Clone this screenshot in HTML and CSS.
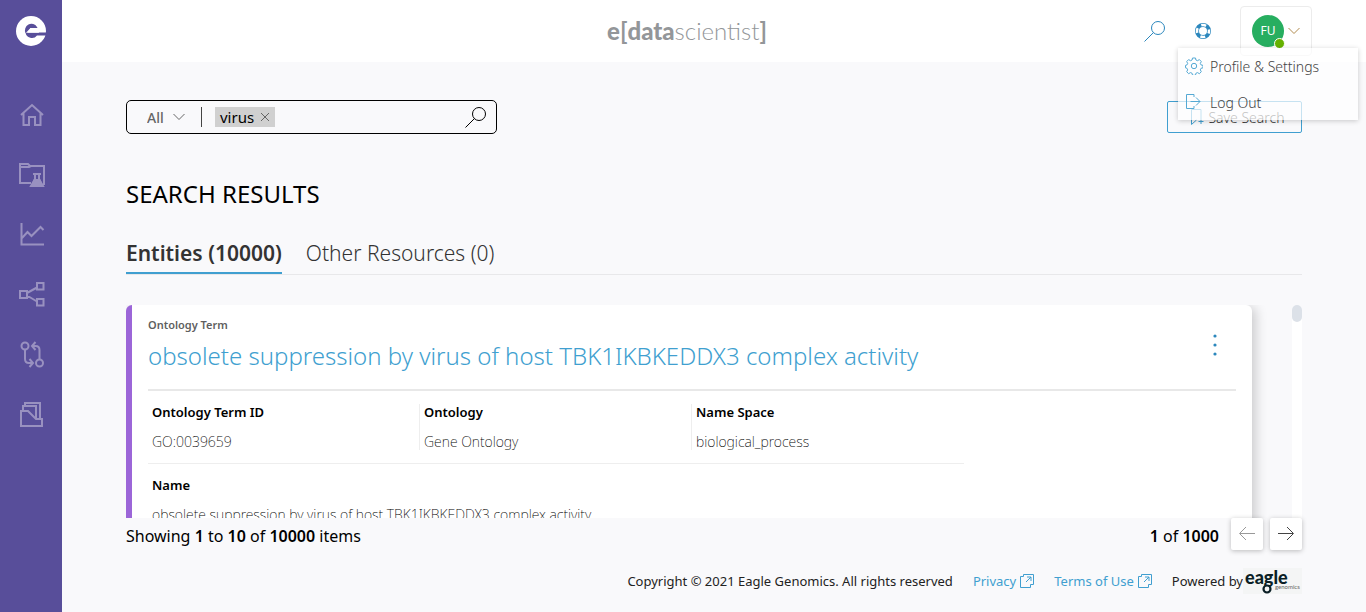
FILE: index.html
```html
<!DOCTYPE html>
<html lang="en">
<head>
<meta charset="utf-8">
<meta name="viewport" content="width=device-width, initial-scale=1">
<title>e[datascientist]</title>
<link rel="stylesheet" href="styles.css">
</head>
<body>
<div class="app">
  <nav class="sidebar" aria-label="Main">
    <a class="sidebar-logo" href="#" aria-label="Start">
      <svg width="30" height="30" viewBox="0 0 30 30"><circle cx="15" cy="15" r="15" fill="#fff"/><path d="M9.500 17A6.500 6.500 0 0 1 21 11L21.500 12H14.500L11.500 17Z" fill="#584e9a"/><path d="M9.500 16.500H30V19.500H21A6.500 6.500 0 0 1 9.500 16.500Z" fill="#584e9a"/><path d="M14.500 12H22L23 16.800H10Z" fill="#fff"/></svg>
    </a>
    <a class="nav-item" href="#" aria-label="Home"><svg viewBox="0 0 26 26"><path d="M2 13 13 3l11 10M4.500 11v12H10v-8h6v8h5.500V11"/></svg></a>
    <a class="nav-item" href="#" aria-label="Projects"><svg viewBox="0 0 26 26"><path d="M12 21H1V2h8l2 2h14v19M1 5h9l2-1"/><path d="M14 12h8M16 12v5l-2.500 5.500h9L20 17v-5"/><path class="fill" d="M15.500 18h5l3.500 6H12Z"/></svg></a>
    <a class="nav-item" href="#" aria-label="Analytics"><svg viewBox="0 0 26 26"><path d="M2.500 1v21.500H25M3 16l5.500-6 4 4L21.500 5l3 3"/></svg></a>
    <a class="nav-item" href="#" aria-label="Network"><svg viewBox="0 0 26 26"><path d="M1 9h7v7H1zM18 1h6.500v6.500H18zM18 17h6.500v6.500H18zM8 11 18 5.500M8 13.500l10 6"/></svg></a>
    <a class="nav-item" href="#" aria-label="Compare"><svg viewBox="0 0 26 26"><circle cx="6" cy="4" r="3.500"/><circle cx="20.500" cy="21" r="3.500"/><path d="M6 7.500V17q0 4 4 4h3.500M10.500 17l3.500 4-3.500 4M20.500 17.500V8q0-4-4-4H13.500M16.500 0l-3.500 4 3.500 4"/></svg></a>
    <a class="nav-item" href="#" aria-label="Collections"><svg viewBox="0 0 26 26"><path d="M2 9h7l8 8h6v7H2ZM4 9V4h13v13M6 4V1h15v16"/></svg></a>
  </nav>

  <div class="page">
    <header class="topbar">
      <a class="brand" href="#"><b>e</b><i>[</i><b>data</b><span>scientist</span><i>]</i></a>
      <div class="top-actions">
        <button class="icon-button" type="button" aria-label="Search"><svg width="22" height="22" viewBox="0 0 22 22"><circle cx="14" cy="8" r="6.500"/><path d="m9.500 12.500-9 9"/></svg></button>
        <button class="icon-button" type="button" aria-label="Help"><svg width="18" height="18" viewBox="0 0 18 18"><circle cx="9" cy="9" r="6" stroke-width="4"/><circle cx="9" cy="9" r="6" stroke="#fff" stroke-width="2.500" stroke-dasharray="5 4.425" stroke-dashoffset="2.500"/></svg></button>
        <div class="account">
          <button class="account-button" type="button" aria-expanded="true" aria-label="Account FU">
            <span class="avatar">FU<span class="presence"></span></span>
            <svg width="12" height="8" viewBox="0 0 12 8"><path d="m.500 1 5.500 5.500L11.500 1"/></svg>
          </button>
          <div class="menu">
            <a href="#"><svg width="18" height="18" viewBox="0 0 18 18"><circle cx="9" cy="9" r="2.700"/><path d="m7.500 1h3l.4 2 1.600.7 1.900-1.100 1.900 2-1 1.800.7 1.500 2 .5v2.400l-2 .5-.7 1.600 1 1.800-1.900 2-1.900-1.100-1.600.7-.4 2h-3l-.4-2-1.600-.7-1.900 1.100-1.900-2 1-1.800-.7-1.600-1.500-.5V8.400l1.500-.5.7-1.500-1-1.800 1.900-2 1.900 1.100 1.600-.7Z"/></svg>Profile &amp; Settings</a>
            <a href="#"><svg width="18" height="18" viewBox="0 0 18 18"><path d="M9 4V1.500H1.500v14H9V13M5.500 8.500H15M11 4.500l4 4-4 4"/></svg>Log Out</a>
          </div>
        </div>
      </div>
    </header>

    <main class="content">
      <div class="toolbar">
        <form class="search" role="search">
          <label class="scope"><select aria-label="Search scope"><option>All</option></select><svg width="12" height="8" viewBox="0 0 12 8"><path d="m.500 1 5.500 5.500L11.500 1"/></svg></label>
          <span class="chip">virus<button type="button" aria-label="Remove virus"><svg width="10" height="10" viewBox="0 0 10 10"><path d="m1 1 8 8M9 1 1 9"/></svg></button></span>
          <input type="text" aria-label="Search terms">
          <button class="search-go" type="submit" aria-label="Search"><svg width="22" height="22" viewBox="0 0 22 22"><circle cx="14" cy="8" r="6.500"/><path d="m9.500 12.500-9 9"/></svg></button>
        </form>
        <button class="save" type="button"><svg width="14" height="18" viewBox="0 0 14 18"><path d="M6.500 12 1.500 16.500V1.500h9.500V11M11 11v5M8.500 13.500h5"/></svg>Save Search</button>
      </div>

      <h1>SEARCH RESULTS</h1>

      <div class="tabs" role="tablist">
        <button class="tab active" type="button" role="tab" aria-selected="true">Entities (10000)</button>
        <button class="tab" type="button" role="tab" aria-selected="false">Other Resources (0)</button>
      </div>

      <div class="results">
        <article class="card">
          <div class="card-head">
            <div>
              <p class="kind">Ontology Term</p>
              <h2><a href="#">obsolete suppression by virus of host TBK1IKBKEDDX3 complex activity</a></h2>
            </div>
            <button class="more" type="button" aria-label="More"><svg width="4" height="22" viewBox="0 0 4 22"><circle cx="2" cy="2" r="1.600"/><circle cx="2" cy="11" r="1.600"/><circle cx="2" cy="20" r="1.600"/></svg></button>
          </div>
          <dl class="facts">
            <div class="fact"><dt>Ontology Term ID</dt><dd>GO:0039659</dd></div>
            <div class="fact"><dt>Ontology</dt><dd>Gene Ontology</dd></div>
            <div class="fact"><dt>Name Space</dt><dd>biological_process</dd></div>
          </dl>
          <dl class="facts wide">
            <div class="fact"><dt>Name</dt><dd>obsolete suppression by virus of host TBK1IKBKEDDX3 complex activity</dd></div>
          </dl>
        </article>
        <div class="track"><div class="thumb"></div></div>
      </div>

      <div class="pager">
        <p>Showing <b>1</b> to <b>10</b> of <b>10000</b> items</p>
        <div class="pager-nav">
          <p><b>1</b> of <b>1000</b></p>
          <button type="button" disabled aria-label="Previous page"><svg width="16" height="14" viewBox="0 0 16 14"><path d="M16 6.500H1M7 0 .500 6.500 7 13"/></svg></button>
          <button type="button" aria-label="Next page"><svg width="16" height="14" viewBox="0 0 16 14"><path d="M0 6.500h15M9 0 15.500 6.500 9 13"/></svg></button>
        </div>
      </div>

      <footer class="footer">
        <span>Copyright © 2021 Eagle Genomics. All rights reserved</span>
        <a href="#">Privacy <svg width="14" height="14" viewBox="0 0 14 14"><path d="M3.500 2.500h-3v11h10v-3M3.500.500h10v10h-3M3.500.500v2M6 8l5-5M7 3h4v4"/></svg></a>
        <a href="#">Terms of Use <svg width="14" height="14" viewBox="0 0 14 14"><path d="M3.500 2.500h-3v11h10v-3M3.500.500h10v10h-3M3.500.500v2M6 8l5-5M7 3h4v4"/></svg></a>
        <span class="powered">Powered by
          <svg class="eagle" width="59" height="26" viewBox="0 0 59 26" role="img" aria-label="eagle genomics"><rect width="59" height="26" fill="#f4f5f5"/><text x="2" y="16" class="eagle-name">eagle</text><circle cx="24" cy="21" r="3.500" fill="#f4f5f5" stroke="#0b1f26" stroke-width="2.200"/><text x="32" y="21" class="eagle-sub">genomics</text></svg>
        </span>
      </footer>
    </main>
  </div>
</div>
</body>
</html>
```
FILE: styles.css
```css
* { box-sizing: border-box; }

body {
  margin: 0;
  font-family: "Noto Sans", "Open Sans", sans-serif;
  font-size: 15px;
  color: #000;
  background: #f9f9fb;
}

h1, h2, p, dl, dd { margin: 0; }
a { color: inherit; text-decoration: none; }
button, select, input { font: inherit; color: inherit; margin: 0; padding: 0; border: 0; background: none; }
svg { display: block; flex: none; fill: none; stroke: currentColor; stroke-width: 1; }

.app { display: flex; height: 100vh; }

.sidebar {
  flex: none;
  width: 62px;
  display: flex;
  flex-direction: column;
  align-items: center;
  background: #584e9a;
  color: #9991c0;
}
.sidebar-logo { padding: 16px 0 39px; }
.sidebar-logo svg { stroke: none; }
.nav-item { height: 60px; display: flex; align-items: center; padding-left: 2px; }
.nav-item svg { width: 26px; height: 26px; stroke-width: 2; overflow: visible; }
.nav-item .fill { fill: currentColor; }

.page { flex: 1; min-width: 0; display: flex; flex-direction: column; }

.topbar {
  display: grid;
  grid-template-columns: 1fr auto 1fr;
  align-items: center;
  height: 62px;
  padding-right: 54px;
  background: #fff;
}
.brand {
  grid-column: 2;
  display: flex;
  align-items: center;
  font-family: Lato, sans-serif;
  font-size: 24px;
  line-height: 28px;
  font-weight: 300;
  color: #939699;
}
.brand b { font-weight: 900; }
.brand i { font-style: normal; font-weight: 700; }
.top-actions { justify-self: end; display: flex; align-items: center; color: #2b87bd; }
.icon-button { cursor: pointer; margin-right: 28px; }

.account { position: relative; }
.account-button {
  width: 72px;
  height: 50px;
  display: flex;
  align-items: center;
  justify-content: center;
  gap: 4px;
  border: 1px solid #ececec;
  border-radius: 4px;
  color: #b08a4e;
}
.avatar {
  position: relative;
  width: 32px;
  height: 32px;
  border-radius: 50%;
  background: #27ae60;
  color: #fff;
  font-size: 12px;
  line-height: 32px;
}
.presence {
  position: absolute;
  right: -1px;
  bottom: -2px;
  width: 11px;
  height: 11px;
  border: 1px solid #fff;
  border-radius: 50%;
  background: #66b200;
}
.menu {
  position: absolute;
  z-index: 2;
  top: 42px;
  right: -46px;
  width: 180px;
  height: 72px;
  background: rgba(255, 255, 255, .7);
  box-shadow: 0 1px 5px rgba(0, 0, 0, .2);
}
.menu a {
  display: flex;
  align-items: center;
  gap: 7px;
  height: 36px;
  padding-left: 7px;
  font-size: 14px;
  font-weight: 300;
  color: #444;
}
.menu svg { color: #55a9d4; }

.content {
  flex: 1;
  min-height: 0;
  display: flex;
  flex-direction: column;
  padding: 38px 64px 0;
}

.toolbar { display: flex; justify-content: space-between; align-items: center; }
.search {
  width: 371px;
  height: 34px;
  display: flex;
  align-items: center;
  padding: 0 9px 0 20px;
  border: 1px solid #000;
  border-radius: 5px;
}
.scope {
  display: flex;
  align-items: center;
  height: 20px;
  padding-right: 16px;
  border-right: 1px solid #444;
  color: #666;
  font-size: 14px;
  font-weight: 500;
}
.scope select { appearance: none; width: 26px; }
.chip {
  display: flex;
  align-items: center;
  gap: 6px;
  height: 20px;
  margin-left: 13px;
  padding: 0 5px;
  background: #d0d0d0;
}
.chip svg { color: #666; }
.search input { flex: 1; min-width: 0; height: 28px; outline: 0; }
.save {
  display: flex;
  align-items: center;
  justify-content: center;
  gap: 4px;
  width: 135px;
  height: 32px;
  padding-left: 6px;
  border: 1px solid #409fd0;
  border-radius: 2px;
  font-size: 14px;
  font-weight: 300;
  color: #333;
}
.save svg { color: #409fd0; }

h1 { margin-top: 43px; font-size: 24px; line-height: 34px; font-weight: 400; }

.tabs { display: flex; gap: 24px; margin-top: 23px; border-bottom: 1px solid #e8e8ea; }
.tab { height: 40px; font-size: 21px; line-height: 28px; font-weight: 300; color: #333; border-bottom: 2px solid transparent; }
.tab.active { font-weight: 600; border-bottom-color: #409fd0; }

.results { flex: 1; min-height: 0; overflow: hidden; display: flex; align-items: flex-start; gap: 40px; margin-top: 30px; }
.card {
  flex: 1;
  min-width: 0;
  padding: 10px 16px 16px;
  border-left: 6px solid #9c66d8;
  border-radius: 6px;
  background: #fff;
  box-shadow: 4px 2px 12px rgba(0, 0, 0, .18);
}
.card-head {
  display: flex;
  justify-content: space-between;
  align-items: center;
  padding: 0 19px 15px 0;
  border-bottom: 2px solid #e8e8e8;
}
.kind { font-size: 11px; line-height: 20px; font-weight: 600; color: #5f5f5f; }
h2 { margin-top: 3px; font-size: 24px; line-height: 36px; font-weight: 300; color: #409fd0; }
.more { color: #2b87bd; }
.more svg { fill: currentColor; stroke: none; }

.facts { width: 75%; display: grid; grid-template-columns: repeat(3, 1fr); padding: 12px 0; border-bottom: 1px solid #eee; }
.facts.wide { grid-template-columns: 1fr; }
.fact { padding-left: 4px; font-size: 13px; line-height: 18px; }
.fact + .fact { box-shadow: -2px 0 0 -1px #eee; }
dt { font-weight: 600; }
dd { margin-top: 12px; font-size: 14px; font-weight: 200; }

.track { flex: none; align-self: stretch; width: 10px; background: #fff; border-radius: 5px 5px 0 0; }
.thumb { height: 17px; border-radius: 5px; background: #dce1e8; }

.pager { display: flex; justify-content: space-between; align-items: center; height: 32px; font-size: 16px; line-height: 20px; }
.pager p { padding-top: 3px; }
.pager b { font-weight: 600; }
.pager-nav { display: flex; align-items: center; gap: 7px; }
.pager-nav p { margin-right: 5px; }
.pager-nav button {
  width: 32px;
  height: 32px;
  display: grid;
  place-items: center;
  border-radius: 2px;
  background: #fff;
  box-shadow: 0 1px 5px rgba(0, 0, 0, .25);
  color: #444;
}
.pager-nav button:disabled { color: #999; }

.footer {
  display: flex;
  justify-content: flex-end;
  align-items: center;
  gap: 20px;
  height: 26px;
  margin: 18px 0;
  font-size: 13px;
  color: #222;
}
.footer a { display: flex; align-items: center; gap: 4px; color: #409fd0; }
.powered { display: flex; align-items: center; }
.eagle { stroke: none; }
.eagle text { stroke: none; fill: #0b1f26; font-family: Lato, sans-serif; }
.eagle .eagle-name { font-size: 18px; font-weight: 900; }
.eagle .eagle-sub { font-size: 6px; fill: #666; }
```
